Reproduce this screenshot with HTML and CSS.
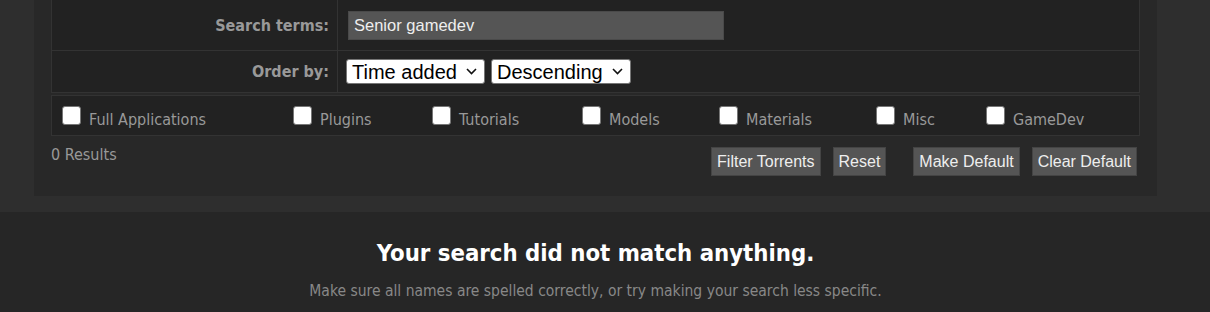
FILE: index.html
```html
<!DOCTYPE html>
<html lang="en">
<head>
    <meta charset="UTF-8">
    <title>Browse Torrents</title>
    <link rel="stylesheet" href="styles.css">
</head>
<body>
    <div class="panel">
        <div class="search-form">
            <div class="form-row row-terms">
                <div class="form-label">Search terms:</div>
                <div class="form-field">
                    <input type="text" class="search-input" value="Senior gamedev">
                </div>
            </div>
            <div class="form-row row-order">
                <div class="form-label">Order by:</div>
                <div class="form-field">
                    <span class="select-wrap">
                        <select class="order-select">
                            <option>Time added</option>
                            <option>Name</option>
                            <option>Size</option>
                        </select>
                        <svg class="chevron" width="11" height="7" viewBox="0 0 11 7"><polyline points="1,1 5.5,5.5 10,1" fill="none" stroke="#111" stroke-width="1.6"/></svg>
                    </span>
                    <span class="select-wrap">
                        <select class="order-select">
                            <option>Descending</option>
                            <option>Ascending</option>
                        </select>
                        <svg class="chevron" width="11" height="7" viewBox="0 0 11 7"><polyline points="1,1 5.5,5.5 10,1" fill="none" stroke="#111" stroke-width="1.6"/></svg>
                    </span>
                </div>
            </div>
        </div>

        <div class="categories">
            <label class="cat"><input type="checkbox"><span>Full Applications</span></label>
            <label class="cat"><input type="checkbox"><span>Plugins</span></label>
            <label class="cat"><input type="checkbox"><span>Tutorials</span></label>
            <label class="cat"><input type="checkbox"><span>Models</span></label>
            <label class="cat"><input type="checkbox"><span>Materials</span></label>
            <label class="cat"><input type="checkbox"><span>Misc</span></label>
            <label class="cat"><input type="checkbox"><span>GameDev</span></label>
        </div>

        <div class="results-bar">
            <span class="result-count">0 Results</span>
            <div class="actions">
                <div class="btn-group">
                    <button class="btn">Filter Torrents</button>
                    <button class="btn">Reset</button>
                </div>
                <div class="btn-group">
                    <button class="btn">Make Default</button>
                    <button class="btn">Clear Default</button>
                </div>
            </div>
        </div>
    </div>

    <section class="no-results">
        <h2>Your search did not match anything.</h2>
        <p>Make sure all names are spelled correctly, or try making your search less specific.</p>
    </section>
</body>
</html>
```

FILE: styles.css
```css
body {
    margin: 0;
    background: #2e2e2e;
    font-family: "DejaVu Sans Condensed", "DejaVu Sans", sans-serif;
    color: #999;
}
.panel {
    margin-left: 34px;
    width: 1123px;
    box-sizing: border-box;
    background: #282828;
    padding: 0 17px 20px 17px;
}
.search-form {
    background: #222;
    border: 1px solid #333;
    border-top: none;
}
.form-row {
    display: grid;
    grid-template-columns: 286px 1fr;
}
.form-row + .form-row {
    border-top: 1px solid #333;
}
.row-terms {
    height: 50px;
}
.row-order {
    height: 41px;
}
.form-label {
    box-sizing: border-box;
    border-right: 1px solid #333;
    padding-right: 8px;
    text-align: right;
    font-weight: bold;
    font-size: 16px;
    display: flex;
    align-items: center;
    justify-content: flex-end;
}
.form-field {
    display: flex;
    align-items: center;
    gap: 6px;
    padding-left: 8px;
}
.search-input {
    margin-left: 2px;
    width: 376px;
    height: 29px;
    box-sizing: border-box;
    background: #555;
    border: 1px solid #4a4a4a;
    color: #eee;
    font-family: "Liberation Sans", Arial, sans-serif;
    font-size: 16.5px;
    padding: 0 5px;
    outline: none;
}
.select-wrap {
    position: relative;
    display: inline-block;
}
.order-select {
    appearance: none;
    -webkit-appearance: none;
    height: 25px;
    box-sizing: border-box;
    background: #fff;
    border: 1px solid #767676;
    border-radius: 3px;
    color: #000;
    font-family: "Liberation Sans", Arial, sans-serif;
    font-size: 20px;
    padding: 0 27px 0 5px;
    display: block;
}
.chevron {
    position: absolute;
    right: 8px;
    top: 9px;
    pointer-events: none;
}
.categories {
    margin-top: 2px;
    height: 41px;
    box-sizing: border-box;
    background: #222;
    border: 1px solid #333;
    padding: 3px 0 0 10px;
    display: grid;
    grid-template-columns: 231px 139px 150px 137px 157px 110px 1fr;
    align-items: center;
}
.cat {
    display: flex;
    align-items: baseline;
    font-size: 16px;
    color: #999;
}
.cat input {
    appearance: none;
    -webkit-appearance: none;
    width: 19px;
    height: 19px;
    margin: 0 8px 0 0;
    background: #fff;
    border: 1px solid #767676;
    border-radius: 3px;
    flex-shrink: 0;
}
.results-bar {
    display: flex;
    justify-content: space-between;
    align-items: flex-start;
    margin-top: 11px;
}
.result-count {
    font-size: 16px;
    line-height: 20px;
    margin-top: -2px;
}
.actions {
    display: flex;
    gap: 27px;
    margin-right: 3px;
}
.btn-group {
    display: flex;
    gap: 12px;
}
.btn {
    height: 29px;
    box-sizing: border-box;
    background: #555;
    border: 1px solid #444;
    color: #eee;
    font-family: "Liberation Sans", Arial, sans-serif;
    font-size: 16px;
    padding: 0 5px;
    cursor: pointer;
}
.no-results {
    margin-top: 16px;
    background: #262626;
    padding: 27px 19px 20px 0;
    text-align: center;
}
.no-results h2 {
    margin: 0;
    color: #fff;
    font-size: 23.7px;
    font-weight: bold;
}
.no-results p {
    margin: 15px 0 0 0;
    color: #888;
    font-size: 15.5px;
}
```
